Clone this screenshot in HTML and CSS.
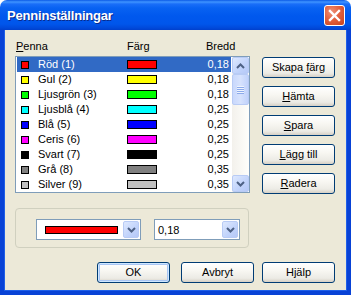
FILE: index.html
```html
<!DOCTYPE html>
<html lang="sv">
<head>
<meta charset="utf-8">
<title>Penninställningar</title>
<link rel="stylesheet" href="styles.css">
</head>
<body>
<div class="window">
  <div class="titlebar">
    <span class="title">Penninställningar</span>
    <span class="close"><svg width="13" height="13" viewBox="0 0 13 13"><path d="M2 2 L11 11 M11 2 L2 11" stroke="#fff" stroke-width="2.4" stroke-linecap="square"/></svg></span>
  </div>
  <div class="client">
    <div class="main">
      <div class="leftcol">
        <div class="head">
          <span class="h1"><u>P</u>enna</span>
          <span class="h2">Färg</span>
          <span class="h3">Bredd</span>
        </div>
        <div class="list">
          <div class="rows">
            <div class="row sel"><span class="sw" style="background:#ff0000"></span><span class="name">Röd (1)</span><span class="bar" style="background:#ff0000"></span><span class="w">0,18</span></div>
            <div class="row"><span class="sw" style="background:#ffff00"></span><span class="name">Gul (2)</span><span class="bar" style="background:#ffff00"></span><span class="w">0,18</span></div>
            <div class="row"><span class="sw" style="background:#00ff00"></span><span class="name">Ljusgrön (3)</span><span class="bar" style="background:#00ff00"></span><span class="w">0,18</span></div>
            <div class="row"><span class="sw" style="background:#00ffff"></span><span class="name">Ljusblå (4)</span><span class="bar" style="background:#00ffff"></span><span class="w">0,25</span></div>
            <div class="row"><span class="sw" style="background:#0000ff"></span><span class="name">Blå (5)</span><span class="bar" style="background:#0000ff"></span><span class="w">0,25</span></div>
            <div class="row"><span class="sw" style="background:#ff00ff"></span><span class="name">Ceris (6)</span><span class="bar" style="background:#ff00ff"></span><span class="w">0,25</span></div>
            <div class="row"><span class="sw" style="background:#000000"></span><span class="name">Svart (7)</span><span class="bar" style="background:#000000"></span><span class="w">0,25</span></div>
            <div class="row"><span class="sw" style="background:#808080"></span><span class="name">Grå (8)</span><span class="bar" style="background:#808080"></span><span class="w">0,35</span></div>
            <div class="row"><span class="sw" style="background:#c0c0c0"></span><span class="name">Silver (9)</span><span class="bar" style="background:#c0c0c0"></span><span class="w">0,35</span></div>
          </div>
          <div class="scroll">
            <span class="sbtn"><svg width="9" height="6" viewBox="0 0 9 6"><path d="M1 5 L4.5 1.5 L8 5" fill="none" stroke="#4d6185" stroke-width="2"/></svg></span>
            <span class="thumb"><span class="grip"></span><span class="grip"></span><span class="grip"></span><span class="grip"></span></span>
            <span class="track"></span>
            <span class="sbtn"><svg width="9" height="6" viewBox="0 0 9 6"><path d="M1 1 L4.5 4.5 L8 1" fill="none" stroke="#4d6185" stroke-width="2"/></svg></span>
          </div>
        </div>
      </div>
      <div class="rightcol">
        <button class="btn">Skapa <u>f</u>ärg</button>
        <button class="btn"><u>H</u>ämta</button>
        <button class="btn"><u>S</u>para</button>
        <button class="btn"><u>L</u>ägg till</button>
        <button class="btn"><u>R</u>adera</button>
      </div>
    </div>
    <div class="group">
      <div class="combo c1">
        <span class="cval"><span class="cbar"></span></span>
        <span class="dd"><svg width="9" height="6" viewBox="0 0 9 6"><path d="M1 1 L4.5 4.5 L8 1" fill="none" stroke="#4d6185" stroke-width="2"/></svg></span>
      </div>
      <div class="combo c2">
        <span class="cval ctext">0,18</span>
        <span class="dd"><svg width="9" height="6" viewBox="0 0 9 6"><path d="M1 1 L4.5 4.5 L8 1" fill="none" stroke="#4d6185" stroke-width="2"/></svg></span>
      </div>
    </div>
    <div class="actions">
      <button class="btn def">OK</button>
      <button class="btn">Avbryt</button>
      <button class="btn last">Hjälp</button>
    </div>
  </div>
</div>
</body>
</html>
```

FILE: styles.css
```css
* { box-sizing: border-box; }
html, body { margin: 0; padding: 0; background: #ffffff; }
body { width: 351px; height: 295px; overflow: hidden; font-family: Tahoma, "Liberation Sans", Arial, sans-serif; font-size: 11px; color: #000; }

.window { width: 351px; height: 295px; display: flex; flex-direction: column; }

.titlebar {
  height: 30px;
  flex: none;
  display: flex;
  align-items: center;
  justify-content: space-between;
  padding: 0 6px 0 7px;
  border-radius: 7px 7px 0 0;
  background: linear-gradient(#0b5ae6 0px, #3f94ff 2px, #1a6ef8 4px, #0862f2 8px, #0058ee 16px, #0056eb 24px, #0049da 28px, #0040cc 30px);
}
.title {
  color: #fff;
  font-family: "Liberation Sans", Arial, sans-serif;
  font-weight: bold;
  font-size: 13px;
  letter-spacing: -0.2px;
  text-shadow: 1px 1px 0 #0a2a8a;
  margin-top: 1px;
}
.close {
  width: 21px; height: 21px;
  border: 1px solid #fff;
  border-radius: 3px;
  background: radial-gradient(circle at 35% 30%, #ee9077 0%, #e2613f 45%, #c8411b 100%);
  display: flex; align-items: center; justify-content: center;
  margin-top: 1px;
}

.client {
  flex: 1;
  background: #ece9d8;
  border-left: 4px solid #0842d6;
  border-right: 4px solid #0842d6;
  border-bottom: 4px solid #0842d6;
  box-shadow: inset 1px 0 0 #1f5fe8, inset -1px 0 0 #1f5fe8, inset 0 -1px 0 #1f5fe8;
  padding: 10px 12px 0 11px;
  display: flex;
  flex-direction: column;
}

.main { display: flex; gap: 12px; }
.leftcol { width: 235px; }
.head { display: flex; height: 13px; line-height: 13px; margin-bottom: 3px; padding-left: 1px; }
.h1 { width: 111px; }
.h2 { width: 79px; }

.list {
  height: 137px;
  border: 1px solid #7f9db9;
  background: #fff;
  display: flex;
}
.rows { width: 216px; }
.row {
  height: 15px;
  display: flex;
  align-items: center;
  margin: 0 1px;
  padding-left: 4px;
  line-height: 15px;
}
.row.sel { background: #316ac5; color: #fff; }
.sw { width: 8px; height: 8px; border: 1px solid #000; flex: none; }
.name { width: 89px; margin-left: 9px; flex: none; }
.bar { width: 30px; height: 9px; border: 1px solid #000; flex: none; }
.w { flex: 1; text-align: right; padding-right: 2px; }

.scroll { width: 17px; display: flex; flex-direction: column; background: linear-gradient(90deg, #f3f1ec, #fefefb); }
.sbtn {
  height: 17px; flex: none;
  border: 1px solid #b8cbf5;
  border-radius: 2px;
  background: linear-gradient(135deg, #dde8fe, #c1d3fb 60%, #b5c8f7);
  display: flex; align-items: center; justify-content: center;
}
.thumb {
  height: 31px; flex: none;
  border: 1px solid #b8cbf5;
  border-radius: 2px;
  background: linear-gradient(90deg, #c9d8fc, #d6e2fd 50%, #c1d2fb);
  display: flex; flex-direction: column; align-items: center; justify-content: center; gap: 1px;
}
.grip { width: 7px; height: 1px; background: #eef4fe; box-shadow: 0 1px 0 #8caaeb; }
.track { flex: 1; }

.rightcol { display: flex; flex-direction: column; gap: 8px; padding-top: 17px; }

.btn {
  width: 73px; height: 21px;
  font-family: Tahoma, "Liberation Sans", Arial, sans-serif;
  font-size: 11px;
  color: #000;
  border: 1px solid #003c74;
  border-radius: 3px;
  background: linear-gradient(#ffffff 0%, #f8f7f2 40%, #ecebe5 80%, #d6d0c5 100%);
  padding: 0;
  line-height: 19px;
  text-align: center;
}
.btn.def { box-shadow: inset 0 0 0 1px #cee7ff, inset 0 0 0 2px #a8c5f4; }

.group {
  margin-top: 14px;
  width: 234px;
  height: 40px;
  border: 1px solid #d0d0bf;
  border-radius: 4px;
  padding: 10px 0 0 20px;
  display: flex;
  gap: 13px;
}
.combo {
  height: 21px;
  border: 1px solid #7f9db9;
  background: #fff;
  display: flex;
  padding: 1px;
}
.c1 { width: 105px; }
.c2 { width: 86px; }
.cval { flex: 1; display: flex; align-items: center; }
.cbar { width: 73px; height: 8px; border: 1px solid #000; background: #ff0000; margin-left: 7px; }
.ctext { padding-left: 2px; }
.dd {
  width: 16px; flex: none;
  border: 1px solid #b8cbf5;
  border-radius: 2px;
  background: linear-gradient(135deg, #dde8fe, #c1d3fb 60%, #b5c8f7);
  display: flex; align-items: center; justify-content: center;
}

.actions { margin-top: 14px; display: flex; justify-content: flex-end; gap: 11px; }
.actions .last { margin-left: -3px; }
```
